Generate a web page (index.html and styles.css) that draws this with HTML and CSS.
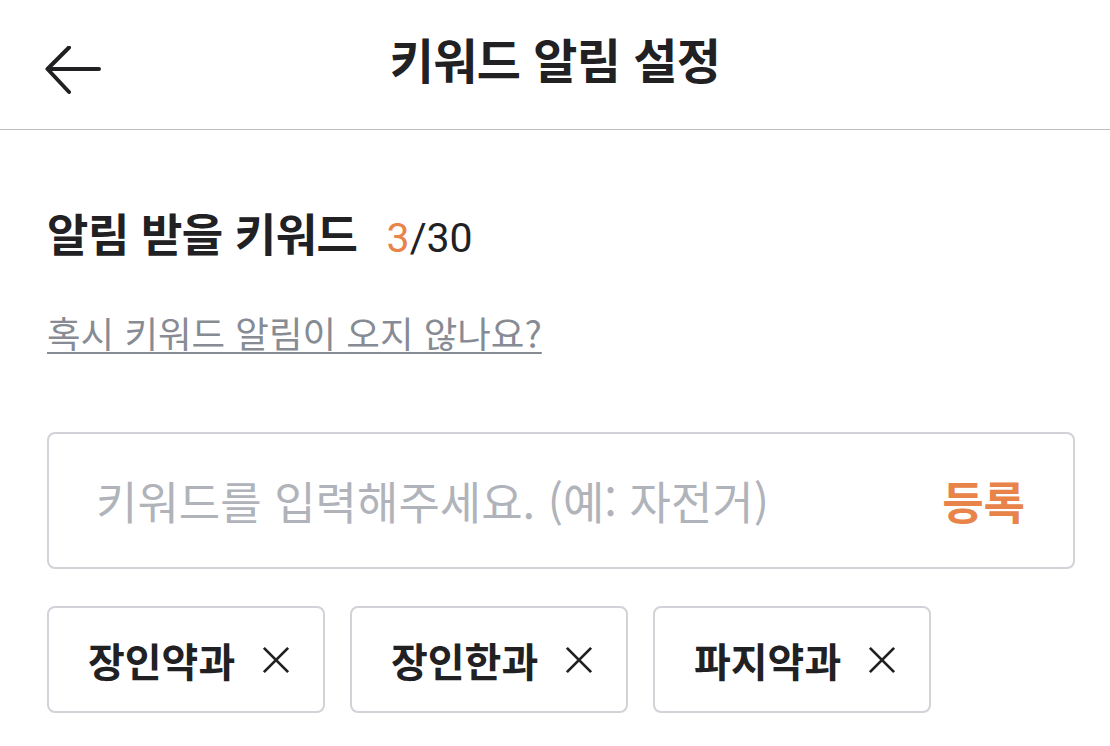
FILE: index.html
```html
<!DOCTYPE html>
<html lang="ko">
<head>
<meta charset="utf-8">
<title>키워드 알림 설정</title>
<link rel="stylesheet" href="styles.css">
</head>
<body>
<header class="topbar">
  <button class="back" aria-label="뒤로">
    <svg width="56" height="50" viewBox="0 0 56 50"><path d="M54 23H3M24 1.5L2.5 23L24 46" fill="none" stroke="#212124" stroke-width="4" stroke-linecap="round" stroke-linejoin="round"/></svg>
  </button>
  <h1 class="title">키워드 알림 설정</h1>
</header>
<main class="content">
  <h2 class="section-title">알림 받을 키워드 <span class="count"><span class="count-now">3</span>/30</span></h2>
  <a class="help" href="#">혹시 키워드 알림이 오지 않나요?</a>
  <div class="input-box">
    <span class="placeholder">키워드를 입력해주세요. (예: 자전거)</span>
    <span class="submit">등록</span>
  </div>
  <div class="chips">
    <div class="chip"><span>장인약과</span><svg class="x" width="30" height="30" viewBox="0 0 30 30"><path d="M2 2L28 28M28 2L2 28" stroke="#212124" stroke-width="3"/></svg></div>
    <div class="chip"><span>장인한과</span><svg class="x" width="30" height="30" viewBox="0 0 30 30"><path d="M2 2L28 28M28 2L2 28" stroke="#212124" stroke-width="3"/></svg></div>
    <div class="chip"><span>파지약과</span><svg class="x" width="30" height="30" viewBox="0 0 30 30"><path d="M2 2L28 28M28 2L2 28" stroke="#212124" stroke-width="3"/></svg></div>
  </div>
</main>
</body>
</html>
```
FILE: styles.css
```css
* { box-sizing: border-box; }
html, body { margin: 0; padding: 0; background: #fff; }
body {
  font-family: "Noto Sans CJK KR", "Noto Sans", sans-serif;
  color: #212124;
  width: 1110px;
  height: 746px;
  overflow: hidden;
}
.topbar {
  position: relative;
  height: 130px;
  border-bottom: 1px solid #bdbdbd;
  display: flex;
  align-items: center;
  justify-content: center;
}
.back {
  position: absolute;
  left: 45px;
  top: 46px;
  padding: 0;
  border: 0;
  background: none;
  display: flex;
}
.title {
  margin: 0;
  font-size: 48px;
  font-weight: 700;
  line-height: 1;
  letter-spacing: -0.6px;
  transform: translateY(-7px);
}
.content {
  padding: 76px 35px 0 47px;
  display: flex;
  flex-direction: column;
  align-items: flex-start;
}
.section-title {
  margin: 0;
  font-size: 45px;
  font-weight: 700;
  line-height: 54px;
  letter-spacing: -0.5px;
}
.count {
  font-weight: 400;
  font-family: "Roboto", "Noto Sans CJK KR", sans-serif;
  font-size: 41px;
  margin-left: 17px;
  letter-spacing: 0;
}
.count-now { color: #e8834a; }
.help {
  margin-top: 46px;
  font-size: 36.5px;
  line-height: 44px;
  color: #868b94;
  text-decoration: underline;
  text-decoration-thickness: 2px;
  text-underline-offset: 4px;
}
.input-box {
  margin-top: 77px;
  width: 100%;
  height: 137px;
  border: 2px solid #d1d3d8;
  border-radius: 8px;
  display: flex;
  align-items: center;
  justify-content: space-between;
  padding: 0 48px 0 47px;
}
.placeholder {
  font-size: 45px;
  color: #b0b3ba;
  letter-spacing: 0;
}
.submit {
  font-size: 45px;
  font-weight: 700;
  color: #e8834a;
}
.chips {
  margin-top: 37px;
  display: flex;
  gap: 25px;
}
.chip {
  width: 278px;
  height: 107px;
  border: 2px solid #d1d3d8;
  border-radius: 8px;
  display: flex;
  align-items: center;
  padding-left: 39px;
  gap: 27px;
  font-size: 40px;
  font-weight: 700;
}
.x { flex: none; width: 28px; height: 28px; }
```
